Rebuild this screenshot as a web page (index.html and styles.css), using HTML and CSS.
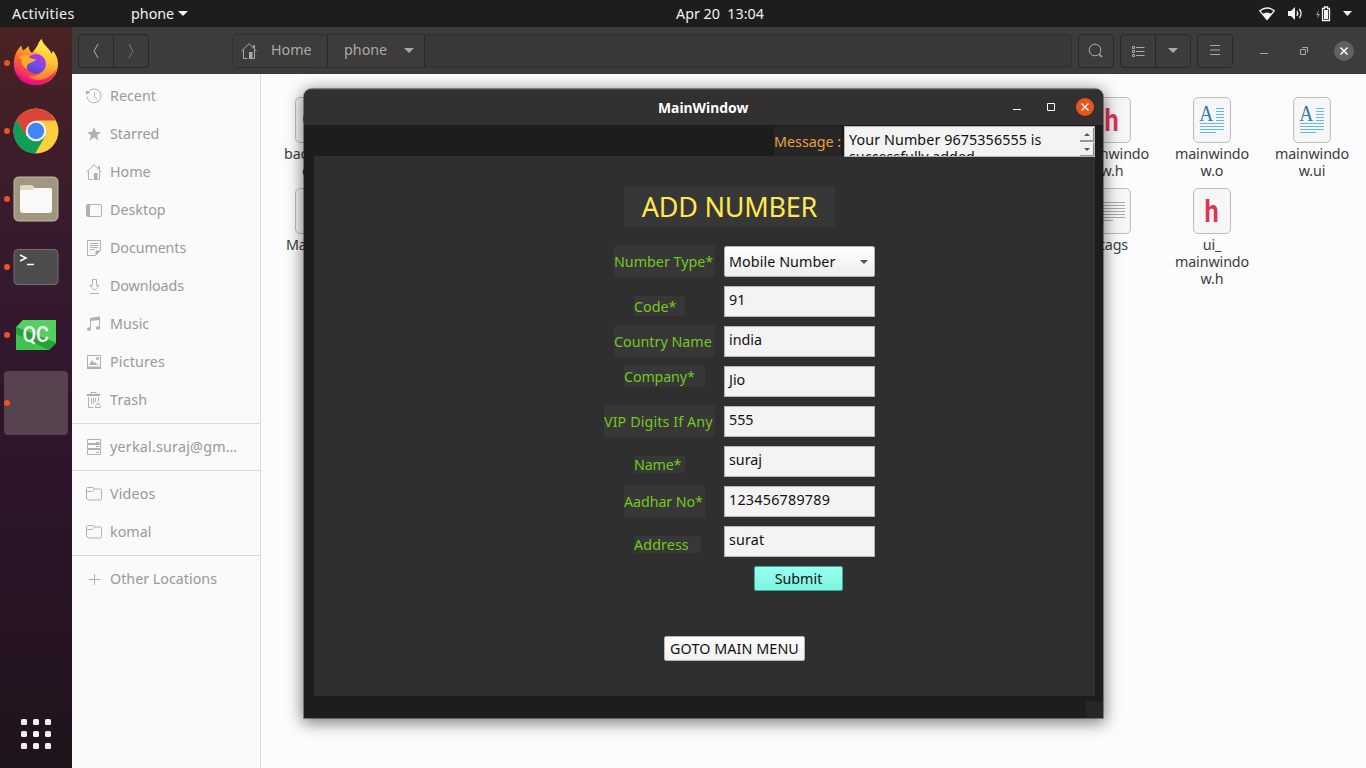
FILE: index.html
```html
<!DOCTYPE html>
<html lang="en">
<head>
<meta charset="utf-8">
<title>MainWindow</title>
<link rel="stylesheet" href="styles.css">
</head>
<body>
<svg width="0" height="0" class="defs">
  <defs>
    <linearGradient id="ff" x1=".8" y1="0" x2=".3" y2="1"><stop offset="0" stop-color="#fff44f"/><stop offset=".35" stop-color="#ffb02e"/><stop offset=".65" stop-color="#ff5a36"/><stop offset="1" stop-color="#e3128b"/></linearGradient>
    <linearGradient id="ffb" x1=".7" y1="0" x2=".3" y2="1"><stop offset="0" stop-color="#b833e1"/><stop offset=".5" stop-color="#7a4cf0"/><stop offset="1" stop-color="#5146b8"/></linearGradient>
    <linearGradient id="fft" x1="0" y1="0" x2="0" y2="1"><stop offset="0" stop-color="#fff352"/><stop offset=".6" stop-color="#ffc93a"/><stop offset="1" stop-color="#ff8a2b"/></linearGradient>
    <symbol id="home" viewBox="0 0 16 16"><path d="M.5 8 8 .8 15.500 8M2.500 7v8.500h4M13.500 7v8.500h-2M12.500 4.500V2.500h1v3" fill="none" stroke="currentColor"/><path d="M8 9h3.500v7H8z" fill="currentColor"/></symbol>
    <symbol id="folder" viewBox="0 0 16 16"><path d="M.5 12.500v-10q0-1 1-1h5.200q1 0 1.300 1l.3.500h6q1.200 0 1.200 1.200v8.300q0 1.500-1.500 1.500h-11q-1.500 0-1.500-1.500zM.5 5.500h5q1.500 0 2-1l.8-1.500" fill="none" stroke="currentColor"/></symbol>
    <symbol id="page" viewBox="0 0 38 46"><rect x=".5" y=".5" width="37" height="45" rx="4.500" fill="#f6f6f6" stroke="#bdbdbd"/></symbol>
    <symbol id="doc" viewBox="0 0 38 46"><use href="#page"/><path d="M23 11.500h8M23 14.500h8M23 17.500h8M23 20.500h8M23 23.500h8M7 26.500h24M7 29.500h24M7 32.500h24M7 35.500h16" stroke="#67b7e9"/></symbol>
  </defs>
</svg>

<header class="topbar">
  <span class="activities">Activities</span>
  <span class="app-menu">phone <svg width="10" height="5"><path d="M0 0h10L5 5z" fill="#f2f2f2"/></svg></span>
  <span class="clock">Apr 20&nbsp; 13:04</span>
  <span class="tray">
    <svg width="16" height="14" viewBox="0 0 16 14"><path d="M.8 3.800Q8-1.800 15.200 3.800L8 12.500z" fill="none" stroke="#f2f2f2" stroke-width="1.300"/><path d="M3.500 7Q8 4 12.500 7L8 13z" fill="#f2f2f2"/></svg>
    <svg width="15" height="13" viewBox="0 0 15 13"><path d="M0 4h3l4-4v13L3 9H0z" fill="#f2f2f2"/><path d="M9 4q1.500 2.500 0 5M11.300 2q3.500 4.500 0 9" fill="none" stroke="#f2f2f2" stroke-width="1.300"/></svg>
    <svg width="15" height="16" viewBox="0 0 15 16"><path d="M3 4 0 9h2l-1 4 3-5H2z" fill="#999"/><path d="M6.500 2.500h2v-1.500h3v1.500h2v12h-7z" fill="none" stroke="#f2f2f2" stroke-width="1.300"/><path d="M8 4h4v9H8z" fill="#f2f2f2"/></svg>
    <svg width="9" height="5"><path d="M0 0h9L4.500 5z" fill="#f2f2f2"/></svg>
  </span>
</header>

<main class="desktop">
  <nav class="dock">
    <div class="dock-item firefox"><svg width="46" height="46" viewBox="0 0 46 46"><path d="M.8 26C.5 18 4 10 8.500 6.500c0 2.500 1 4 2 5L15.500 7c.2 3 1.500 5.500 3.500 7l6-8Q26 2 28.500 0c1.500 5 5 7.500 7 10 2 2.300 2.500 3.500 3 5l1.500-3c4 5 5.300 9 5 14C44.500 38 35 46 23 46S1.300 38 .8 26z" fill="url(#ff)"/><path d="M22 12q4-9 6.500-12c1.500 5 5 7.500 7 10 2 2.300 2.500 3.500 3 5l1.500-3c5 8 6 18 0 24-6 7-18 7-24 1 14 2 22-13 12-21z" fill="url(#fft)" opacity=".75"/><circle cx="23" cy="25" r="10" fill="url(#ffb)"/><path d="M6 18q8-4 10 0c2 2 5 2 7 2-1 3-5 3-6 4-3 1-4 3-3 6-4-2-6-6-5-9z" fill="#ffad2b"/><path d="M2 32c4 12 15 16 26 13 8-2 14-8 15-14-6 10-27 17-41 1z" fill="#ee087f" opacity=".7"/></svg></div>
    <div class="dock-item"><svg width="46" height="46" viewBox="0 0 46 46"><circle cx="23" cy="23" r="22.500" fill="#ffcd40"/><path d="M3.500 11.700A22.500 22.500 0 0 1 42.500 12.500H23L12.500 27z" fill="#db4437"/><path d="M3.500 11.700A22.500 22.500 0 0 0 22.200 45.500L32 28.500 13.500 28z" fill="#0f9d58"/><circle cx="23" cy="23" r="10.300" fill="#f1f1f1"/><circle cx="23" cy="23" r="8.200" fill="#4285f4"/></svg></div>
    <div class="dock-item"><svg width="46" height="46" viewBox="0 0 46 46"><rect x="1" y="1" width="44" height="44" rx="4.500" fill="#a09780" stroke="#c4bda6"/><path d="M7 16v-5q0-2 2-2h9q2 0 3 2l1 1h14q3 0 3 3z" fill="#dedacb"/><path d="M7 16q0-2 2-2h9q2 0 3-1.500 1-.5 3-.5h13q2 0 2 2v20q0 3-3 3H10q-3 0-3-3z" fill="#faf9f8"/></svg></div>
    <div class="dock-item"><svg width="46" height="38" viewBox="0 0 46 38"><rect x="1" y="1.500" width="44" height="35" rx="4" fill="#4c4c4c" stroke="#707070"/><path d="m7 7 6 3-6 3M14 16.500h7" fill="none" stroke="#fff" stroke-width="1.500"/></svg></div>
    <div class="dock-item"><div class="qc"><svg width="40" height="30" viewBox="0 0 40 30"><path d="M7 0h33v23l-7 7H0V7z" fill="#41c44e"/><path d="M0 7 40 23l-7 7L0 14z" fill="#24a336"/><path d="M7 0h33v22L1 7z" fill="#55d060"/></svg><span>QC</span></div></div>
    <div class="dock-item active"></div>
    <div class="apps"><svg width="30" height="30" fill="#f5f5f0"><g id="r"><rect width="6" height="6" rx="1.500"/><rect x="12" width="6" height="6" rx="1.500"/><rect x="24" width="6" height="6" rx="1.500"/></g><use href="#r" y="12"/><use href="#r" y="24"/></svg></div>
  </nav>

  <section class="files">
    <div class="headerbar">
      <div class="btns nav-btns"><b><svg width="8" height="16"><path d="M6 1 2 8l4 7" fill="none" stroke="#b0b0ae"/></svg></b><b><svg width="8" height="16"><path d="m2 1 4 7-4 7" fill="none" stroke="#777"/></svg></b></div>
      <div class="path">
        <span class="crumb crumb-home"><svg width="16" height="16"><use href="#home"/></svg><i>Home</i></span>
        <span class="crumb crumb-phone"><i>phone</i><svg width="10" height="5"><path d="M0 0h10L5 5z" fill="#aaa"/></svg></span>
      </div>
      <div class="btns"><b><svg width="16" height="16"><circle cx="7" cy="7" r="5.800" fill="none" stroke="#aaa"/><path d="m11 11 3 3" stroke="#aaa" stroke-width="1.500"/></svg></b></div>
      <div class="btns"><b><svg width="13" height="12" fill="none" stroke="#aaa"><path d="M4 2.500h8.500M4 6.500h8.500M4 10.500h8.500M.5 1.500h2v2h-2zM.5 5.500h2v2h-2zM.5 9.500h2v2h-2z"/></svg></b><b><svg width="10" height="5"><path d="M0 0h10L5 5z" fill="#aaa"/></svg></b></div>
      <div class="btns"><b><svg width="10" height="11"><path d="M0 .5h10M0 5h10M0 9.500h10" stroke="#aaa"/></svg></b></div>
      <div class="wm"><svg width="8" height="10"><path d="M0 7.500h8" stroke="#aaa"/></svg><svg width="8" height="8" fill="none" stroke="#aaa"><path d="M.5 2.500h5v5h-5zM2.500.5h5v5"/></svg><em><svg width="8" height="8"><path d="m.5.5 7 7m0-7-7 7" stroke="#fff" stroke-width="1.500"/></svg></em></div>
    </div>
    <div class="files-body">
      <aside class="sidebar">
        <div class="place"><svg width="16" height="16" fill="none" stroke="currentColor"><path d="M2.500 3.500a7 7 0 1 1-1.500 5M8.500 4v5l2.500 2"/><path d="M.5 3v3l3-1.500z" fill="currentColor"/></svg><span>Recent</span></div>
        <div class="place"><svg width="16" height="16"><path d="m8 1 2 5h5l-4 3.200 1.500 5.300L8 11.200l-4.500 3.300L5 9.200 1 6h5z" fill="currentColor"/></svg><span>Starred</span></div>
        <div class="place"><svg width="16" height="16"><use href="#home"/></svg><span>Home</span></div>
        <div class="place"><svg width="16" height="16"><rect x=".5" y="2.500" width="15" height="12" rx="1.500" fill="none" stroke="currentColor"/><path d="M1 3h3v11H1z" fill="currentColor"/></svg><span>Desktop</span></div>
        <div class="place"><svg width="16" height="16" fill="none" stroke="currentColor"><path d="M1.500.5h13v10l-5 5h-8zM4 3.500h8M4 5.500h8M4 7.500h8M4 9.500h5"/><path d="M14 11h-4v4z" fill="currentColor"/></svg><span class="tight">Documents</span></div>
        <div class="place"><svg width="16" height="16" fill="none" stroke="currentColor"><path d="M6.500 1.500h4v6H13l-4.500 5-4.500-5h2.500zM4 15.500h9"/></svg><span class="tight">Downloads</span></div>
        <div class="place"><svg width="16" height="16"><path d="M4 2 14 .5V12h-1V4L5 5v8H4z" fill="currentColor"/><ellipse cx="3" cy="13" rx="2.200" ry="1.800" fill="currentColor"/><ellipse cx="12" cy="12" rx="2.200" ry="1.800" fill="currentColor"/></svg><span>Music</span></div>
        <div class="place"><svg width="16" height="16"><path d="M1.500 1.500h13v13h-13z" fill="none" stroke="currentColor"/><path d="M3 11 6 6l2 3 1-1 3 3zM1 12.500h14V15H1z" fill="currentColor"/><circle cx="11.500" cy="4.500" r="1.500" fill="currentColor"/></svg><span class="loose">Pictures</span></div>
        <div class="place"><svg width="16" height="16" fill="none" stroke="currentColor"><path d="M1 2.500h13v1H1zM5 2.500v-2h5v2M2.500 5v10.500h5M12.500 5v4M5.500 6v6M7.500 6v6M9.500 6v4"/><path d="m11 10.500 1.500 1 1-1M12 11.500q3 2 2.500 4h-5q-.5-2 2.500-4z"/></svg><span class="loose">Trash</span></div>
        <hr>
        <div class="place"><svg width="16" height="16" fill="none" stroke="currentColor"><path d="M1.500.5h13v4h-13zM1.500 5.500h13v4h-13zM1.500 10.500h13v5h-13zM10 3.500h3M10 7.500h3M10 13.500h3"/></svg><span class="account">yerkal.suraj@gm…</span></div>
        <hr>
        <div class="place"><svg width="16" height="16"><use href="#folder"/></svg><span class="loose">Videos</span></div>
        <div class="place"><svg width="16" height="16"><use href="#folder"/></svg><span>komal</span></div>
        <hr>
        <div class="place"><svg width="16" height="16"><path d="M3 8.500h11M8.500 3v11" stroke="currentColor"/></svg><span>Other Locations</span></div>
      </aside>
      <div class="file-grid">
        <div class="file c1"><svg width="38" height="46"><use href="#page"/><circle cx="16" cy="22" r="7" fill="none" stroke="#199b8c" stroke-width="2"/></svg><p>backend.<br>cpp</p></div>
        <div class="file c9"><svg width="38" height="46"><use href="#page"/></svg><strong>h</strong><p>mainwindo<br>w.h</p></div>
        <div class="file c10"><svg width="38" height="46"><use href="#doc"/></svg><strong class="letter">A</strong><p>mainwindo<br>w.o</p></div>
        <div class="file c11"><svg width="38" height="46"><use href="#doc"/></svg><strong class="letter">A</strong><p>mainwindo<br>w.ui</p></div>
        <div class="file c1"><svg width="38" height="46"><use href="#page"/></svg><p>Makefile</p></div>
        <div class="file c9"><svg width="38" height="46"><use href="#page"/><path d="M7 14.500h25M7 17.500h25M7 20.500h25M7 23.500h25M7 26.500h25M7 29.500h25M7 32.500h13" stroke="#aaa"/></svg><p>.tags</p></div>
        <div class="file c10"><svg width="38" height="46"><use href="#page"/></svg><strong>h</strong><p>ui_<br>mainwindo<br>w.h</p></div>
      </div>
    </div>
  </section>
</main>

<section class="window">
  <div class="titlebar"><h1>MainWindow</h1><div class="controls"><svg width="8" height="8"><path d="M0 6.500h8" stroke="#fff"/></svg><svg width="8" height="8"><path d="M.5.5h7v7h-7z" fill="none" stroke="#fff"/></svg><em><svg width="8" height="8"><path d="m.5.500 7 7m0-7-7 7" stroke="#fff" stroke-width="1.300"/></svg></em></div></div>
  <div class="message-row">
    <label>Message :</label>
    <div class="message"><p><span class="m1">Your Number 9675356555 is</span><br><span>successfully added</span></p><div class="scroll"><b><svg width="6" height="3"><path d="M0 3h6L3 0z" fill="#555"/></svg></b><b><svg width="6" height="3"><path d="M0 0h6L3 3z" fill="#555"/></svg></b></div></div>
  </div>
  <div class="panel">
    <h2>ADD NUMBER</h2>
    <form class="form">
      <div class="row"><label class="l1">Number Type*</label><div class="select"><span>Mobile Number</span><svg width="8" height="4"><path d="M0 0h8L4 4z" fill="#555"/></svg></div></div>
      <div class="row"><label class="l2">Code*</label><div class="field">91</div></div>
      <div class="row"><label class="l3">Country Name</label><div class="field">india</div></div>
      <div class="row"><label class="l4">Company*</label><div class="field">Jio</div></div>
      <div class="row"><label class="l5">VIP Digits If Any</label><div class="field">555</div></div>
      <div class="row"><label class="l6">Name*</label><div class="field">suraj</div></div>
      <div class="row"><label class="l7">Aadhar No*</label><div class="field num">123456789789</div></div>
      <div class="row"><label class="l8">Address</label><div class="field loose">surat</div></div>
    </form>
    <div class="button submit">Submit</div>
    <div class="button goto">GOTO MAIN MENU</div>
  </div>
  <div class="status"><i></i></div>
</section>
</body>
</html>
```

FILE: styles.css
```css
* { box-sizing: border-box; }
body { margin: 0; width: 1366px; height: 768px; overflow: hidden; position: relative; font: 14.3px/18px "Noto Sans", "Open Sans", sans-serif; color: #3d3d3d; background: #fcfcfc; }
svg { display: block; flex: none; overflow: visible; }
.defs { position: absolute; }
h1, h2, p, hr { margin: 0; }
i, em { font-style: normal; }

.topbar { height: 27px; background: #1d1d1d; color: #f2f2f2; display: flex; align-items: center; padding: 0 0 0 12px; }
.activities { width: 119px; letter-spacing: .3px; }
.app-menu { display: flex; align-items: center; gap: 4px; width: 545px; }
.clock { width: 583px; white-space: nowrap; }
.tray { display: flex; align-items: center; gap: 13px; }
.tray svg:nth-child(4) { margin-left: -1px; }

.desktop { display: flex; height: 741px; }
.dock { width: 72px; background: linear-gradient(#4b2222 0, #3d1d2a 130px, #34192f 260px, #2f162d 400px, #281426 560px, #20141c 741px); display: flex; flex-direction: column; padding: 4px 4px 0; gap: 4px; }
.dock-item { width: 64px; height: 64px; display: flex; align-items: center; justify-content: center; position: relative; }
.dock-item::before { content: ""; position: absolute; left: 0; top: 29px; width: 6px; height: 6px; border-radius: 50%; background: #e95420; }
.dock-item.firefox svg { margin-bottom: 2px; }
.dock-item.active { background: #57424f; border-radius: 4px; }
.qc { display: grid; place-items: center; }
.qc > * { grid-area: 1 / 1; }
.qc span { font: 500 22px/30px "Roboto", sans-serif; color: #fff; z-index: 1; transform: scaleX(.9); }
.apps { margin-top: auto; padding: 0 17px 19px; }

.files { width: 1294px; }
.headerbar { height: 47px; background: #3d3c3a; display: flex; align-items: center; padding: 0 12px 0 6px; color: #aaa; }
.btns { display: flex; height: 34px; border: 1px solid #292827; border-radius: 4px; margin-right: 6px; }
.btns b { width: 34px; display: grid; place-items: center; }
.btns b + b { border-left: 1px solid #292827; width: 35px; }
.nav-btns { margin-right: 83px; }
.path { width: 840px; height: 34px; margin-right: 6px; border: 1px solid #31302e; border-radius: 4px; background: #393836; display: flex; }
.crumb { display: flex; align-items: center; border-right: 1px solid #292827; background: #3d3c3a; }
.crumb i { padding-bottom: 2px; }
.crumb-home { width: 95px; padding-left: 8px; gap: 14px; }
.crumb-phone { width: 97px; padding-left: 16px; gap: 17px; }
.wm { display: flex; align-items: center; flex: 1; padding-left: 21px; }
.wm svg:nth-child(2) { margin: 0 26px 0 32px; }
.wm em { width: 20px; height: 20px; border-radius: 50%; background: #626160; display: grid; place-items: center; }
.files-body { display: flex; height: 694px; }
.sidebar { width: 189px; background: #fafafa; border-right: 1px solid #dcdcdc; color: #999; padding-top: 3px; }
.place { height: 38px; display: flex; align-items: center; padding-left: 14px; gap: 8px; white-space: nowrap; }
.place svg { color: #b0b0b0; }
.account { letter-spacing: .22px; }
.loose { letter-spacing: .15px; }
.tight { letter-spacing: -.1px; }
.sidebar hr { border: 0; height: 1px; background: #dcdcdc; margin: 4px 0; }
.file-grid { flex: 1; display: grid; grid-template-columns: repeat(11, 100px); grid-template-rows: 91px 91px; padding: 23px 0 0 1px; }
.file { display: flex; flex-direction: column; align-items: center; text-align: center; position: relative; line-height: 17px; letter-spacing: -.1px; }
.file p { margin-top: 2px; }
.file strong { position: absolute; top: 6px; left: 41px; font: 700 31px/36px "Roboto", sans-serif; color: #de3456; transform: scaleX(.82); }
.file strong.letter { top: 3px; left: 36px; font: 23px/28px "Liberation Serif", serif; color: #2d73b3; transform: scaleX(.85); }
.c1 { grid-column: 1; padding-left: 4px; }
.c9 { grid-column: 9; }
.c10 { grid-column: 10; }
.c11 { grid-column: 11; }

.window { position: absolute; left: 304px; top: 89px; width: 799px; height: 629px; background: #1d1d1d; border-radius: 8px 8px 0 0; box-shadow: 0 0 0 1px rgba(0,0,0,.35), 0 3px 16px 2px rgba(0,0,0,.5); overflow: hidden; color: #111; }
.titlebar { height: 36px; background: #323030; display: flex; align-items: center; justify-content: flex-end; padding-right: 9px; box-shadow: inset 0 1px #454343; }
.titlebar h1 { width: 90px; margin-right: 265px; padding-top: 2px; text-align: center; font-size: 13.900px; font-weight: 700; color: #fff; white-space: nowrap; }
.controls { display: flex; align-items: center; }
.controls svg:nth-child(2) { margin: 0 21px 0 26px; }
.controls em { width: 18px; height: 18px; border-radius: 50%; background: #e95420; display: grid; place-items: center; }
.message-row { height: 31px; padding: 1px 8px 0 470px; display: flex; gap: 3px; }
.message-row label { width: 67px; background: #262626; color: #e9a13b; line-height: 32px; white-space: nowrap; }
.message { width: 251px; height: 31px; background: #f3f3f3; border: 1px solid #b4b4b4; display: flex; justify-content: space-between; overflow: hidden; flex: none; position: relative; }
.message p { padding: 4px 0 0 4px; white-space: nowrap; line-height: 17px; }
.m1 { letter-spacing: .1px; }
.scroll { width: 14px; padding-top: 1px; }
.scroll b { display: grid; place-items: center; height: 14px; background: #f0f0f0; border-right: 1px solid #888; border-bottom: 2px solid #999; margin-bottom: 1px; }
.panel { margin-left: 10px; width: 781px; height: 540px; background: #2f2f2f; padding: 30px 0 0 290px; }
.panel h2 { width: 211px; height: 41px; margin-left: 20px; background: #373737; color: #ffe94e; font-weight: 400; font-size: 27px; line-height: 42px; text-align: center; letter-spacing: -.25px; white-space: nowrap; }
.form { display: grid; gap: 9px; margin-top: 19px; }
.row { display: grid; grid-template-columns: 120px 151px; height: 31px; align-items: start; }
.row label { background: #373737; color: #73c91c; display: flex; align-items: center; white-space: nowrap; }
.l1, .l3 { margin-left: 10px; width: 101px; height: 31px; }
.l2 { margin: 10px 0 0 30px; width: 51px; height: 20px; padding-top: 2px; }
.l4 { margin-left: 20px; width: 81px; height: 21px; letter-spacing: -.15px; }
.l5 { width: 111px; height: 31px; letter-spacing: .1px; }
.l6 { margin: 10px 0 0 30px; width: 51px; height: 17px; letter-spacing: -.2px; }
.l7 { margin-left: 20px; width: 81px; height: 31px; letter-spacing: -.1px; }
.l8 { margin: 10px 0 0 30px; width: 67px; height: 17px; letter-spacing: .1px; }
.field { height: 31px; background: #f3f3f3; border: 1px solid #b4b4b4; padding: 4px 4px 0; color: #111; }
.num { letter-spacing: .25px; }
.select { height: 31px; background: linear-gradient(#fff, #ededed); border: 1px solid #b4b4b4; border-radius: 2px; padding: 0 6px 0 4px; display: flex; align-items: center; justify-content: space-between; white-space: nowrap; letter-spacing: .08px; }
.button { height: 25px; border: 1px solid #b4b4b4; border-radius: 2px; background: linear-gradient(#fff, #f0f0f0); line-height: 23px; text-align: center; white-space: nowrap; }
.submit { width: 89px; margin: 9px 0 0 150px; background: linear-gradient(#9dfff0, #78f5e0); border-color: #36ab98; }
.goto { width: 141px; margin: 45px 0 0 60px; letter-spacing: .1px; }
.status { height: 22px; display: flex; justify-content: flex-end; align-items: flex-end; }
.status i { width: 17px; height: 17px; background: #262626; }
```
